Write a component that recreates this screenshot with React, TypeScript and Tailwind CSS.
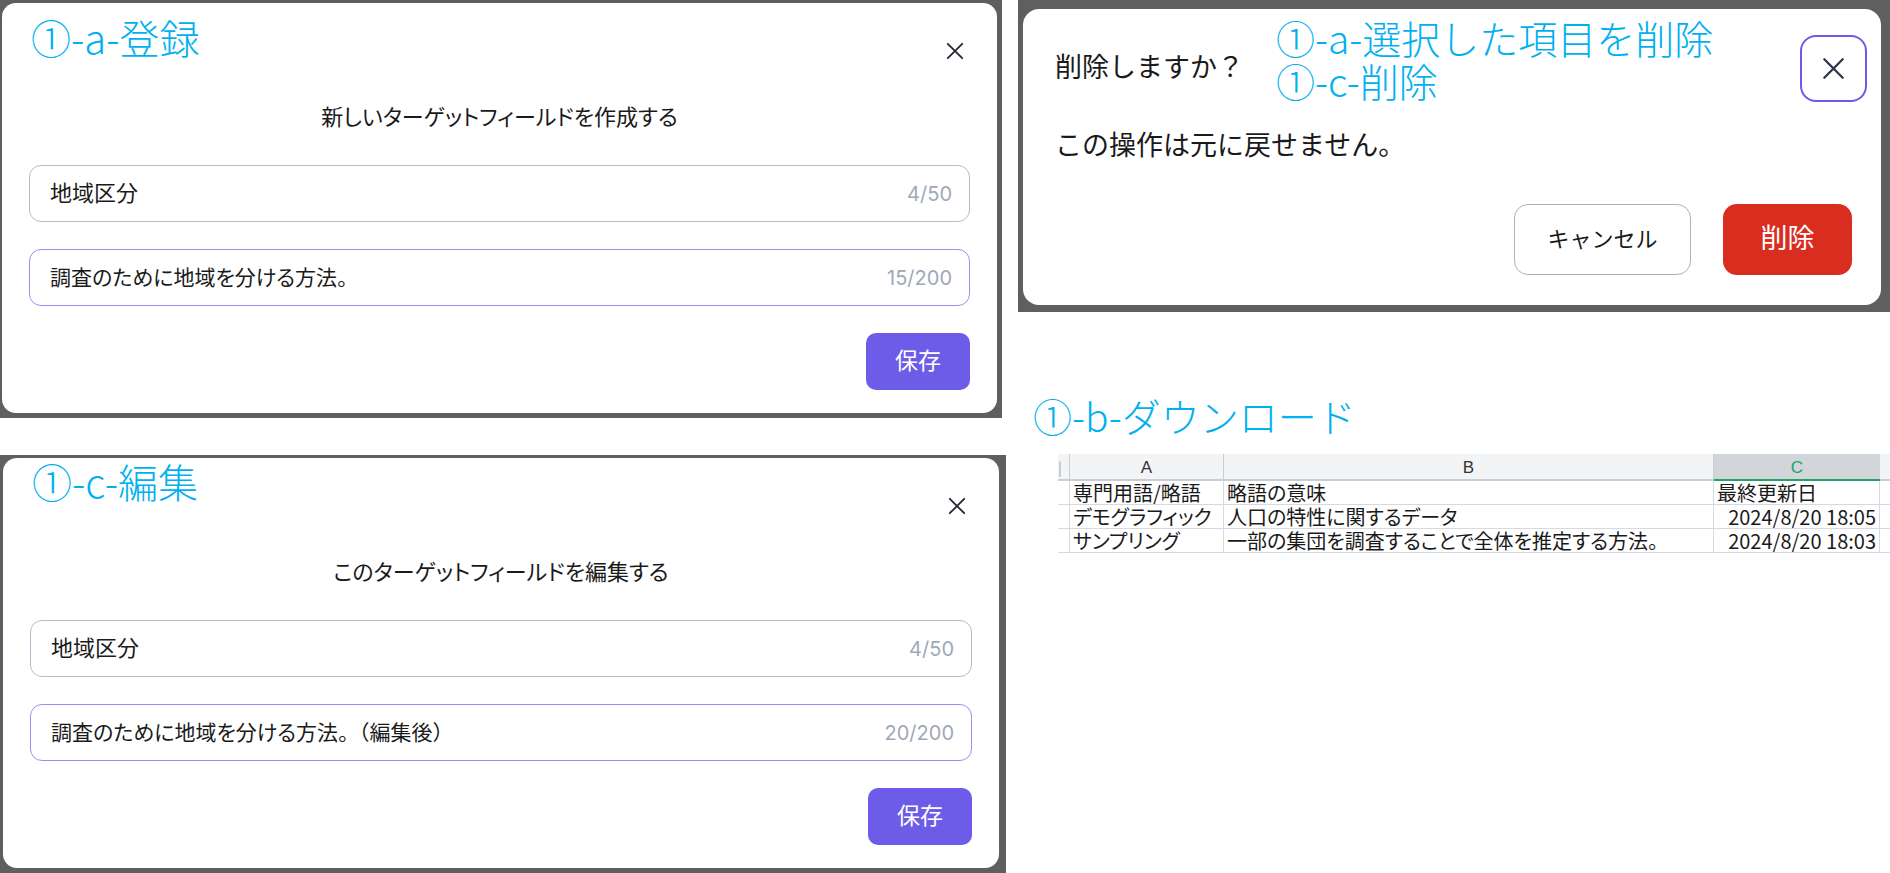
import React from "react";

const jp = "font-['Inter','Noto_Sans_CJK_JP',sans-serif]";
const note = "font-['Noto_Sans_CJK_JP',sans-serif] font-light text-[#00b0f0] leading-none";

function XIcon({ className = "" }: { className?: string }) {
  return (
    <svg viewBox="0 0 20 20" className={className} fill="none" stroke="currentColor" strokeWidth={2} strokeLinecap="round">
      <path d="M2 2L18 18M18 2L2 18" />
    </svg>
  );
}

interface FieldDialogProps {
  frame: string;
  label: string;
  labelTop: string;
  title: string;
  name: string;
  nameCount: string;
  desc: string;
  suffix?: string;
  descCount: string;
}

const FieldDialog = ({ frame, label, labelTop, title, name, nameCount, desc, suffix, descCount }: FieldDialogProps) => (
  <div className={`bg-[#5f5f5f] h-[418px] ${frame}`}>
    <div className={`relative h-full rounded-[14px] bg-white px-[27px] pt-[39px] pb-[23px] flex flex-col ${jp}`}>
      <div className={`absolute left-[29px] ${labelTop} text-[40px] ${note}`}>{label}</div>
      <div className="flex justify-end pr-[5px]">
        <XIcon className="w-[20px] h-[18px] text-[#222831]" />
      </div>
      <h2 className="mt-[43px] text-center text-[22px] leading-[28px] text-[#1a1a1a] [font-feature-settings:'palt']">{title}</h2>
      <div className="mt-[34px] h-[57px] rounded-[12px] border-[1.5px] border-[#b4bccb] flex items-center justify-between pl-[20px] pr-[17px]">
        <span className="text-[22px] text-[#1a1a1a] [font-feature-settings:'palt']">{name}</span>
        <span className="text-[20px] text-[#a0a8b8]">{nameCount}</span>
      </div>
      <div className="mt-[27px] h-[57px] rounded-[12px] border-[1.5px] border-[#9d8cf0] flex items-center justify-between pl-[20px] pr-[17px]">
        <span className="text-[21px] text-[#1a1a1a]">
          <span className="[font-feature-settings:'palt']">{desc}</span>
          {suffix}
        </span>
        <span className="text-[20px] text-[#a0a8b8]">{descCount}</span>
      </div>
      <div className="mt-[27px] flex justify-end">
        <button className="w-[104px] h-[57px] rounded-[10px] bg-[#6c5ce7] text-white text-[23px]">保存</button>
      </div>
    </div>
  </div>
);

const rows = [
  { a: "専門用語/略語", b: "略語の意味", c: "最終更新日", right: false },
  { a: "デモグラフィック", b: "人口の特性に関するデータ", c: "2024/8/20 18:05", right: true },
  { a: "サンプリング", b: "一部の集団を調査することで全体を推定する方法。", c: "2024/8/20 18:03", right: true },
];

const cell = "h-[24px] border-b border-r border-[#d5d9e3] leading-[24px] px-[3px] whitespace-nowrap overflow-hidden";

export default function App() {
  return (
    <div className="w-[1890px] h-[873px] bg-white flex gap-[12px] overflow-hidden">
      <div className="w-[1006px] flex flex-col">
        <div className="w-[1002px]">
          <FieldDialog
            frame="pt-[3px] pl-[2px] pr-[5px] pb-[5px]"
            label="①-a-登録"
            labelTop="top-[14px]"
            title="新しいターゲットフィールドを作成する"
            name="地域区分"
            nameCount="4/50"
            desc="調査のために地域を分ける方法"
            suffix="。"
            descCount="15/200"
          />
        </div>
        <div className="mt-[37px]">
          <FieldDialog
            frame="pt-[3px] pl-[3px] pr-[7px] pb-[5px]"
            label="①-c-編集"
            labelTop="top-[3px]"
            title="このターゲットフィールドを編集する"
            name="地域区分"
            nameCount="4/50"
            desc="調査のために地域を分ける方法"
            suffix="。（編集後）"
            descCount="20/200"
          />
        </div>
      </div>

      <div className="flex-1 flex flex-col">
        <div className="h-[312px] bg-[#5f5f5f] pt-[9px] pl-[5px] pr-[9px] pb-[7px]">
          <div className={`relative h-full rounded-[16px] bg-white pl-[32px] pr-[14px] pt-[26px] ${jp}`}>
            <div className={`absolute left-[253px] top-[9px] text-[39px] ${note}`}>
              <div className="h-[43px]">①-a-選択した項目を削除</div>
              <div>①-c-削除</div>
            </div>
            <div className="flex items-center justify-between h-[67px]">
              <span className="text-[27px] text-[#1a1a1a]">削除しますか？</span>
              <button className="w-[67px] h-[67px] rounded-[16px] border-2 border-[#6b5ce7] flex items-center justify-center">
                <XIcon className="w-[23px] h-[23px] text-[#2d3748]" />
              </button>
            </div>
            <p className="mt-[26px] text-[27px] leading-[36px] text-[#1a1a1a]">この操作は元に戻せません。</p>
            <div className="mt-[40px] flex justify-end gap-[32px] pr-[15px]">
              <button className="w-[177px] h-[71px] rounded-[14px] border-[1.5px] border-[#aab2c0] bg-white text-[22px] text-[#1a1a1a]">キャンセル</button>
              <button className="w-[129px] h-[71px] rounded-[14px] bg-[#d92d20] text-white text-[27px]">削除</button>
            </div>
          </div>
        </div>

        <div className={`mt-[84px] ml-[15px] text-[39px] ${note}`}>①-b-ダウンロード</div>

        <div className="mt-[19px] ml-[40px] grid grid-cols-[12px_154px_490px_166px_1fr] font-['Noto_Sans_CJK_JP',sans-serif] [font-feature-settings:'palt'] text-[20px] text-[#1a1a1a]">
          <div className="h-[27px] bg-[#f3f4f6] border-r border-b-2 border-[#c9cdd6] text-[#9ca3af] text-[14px] leading-[27px]">|</div>
          <div className="h-[27px] bg-[#f3f4f6] border-r border-b-2 border-[#c9cdd6] text-center text-[17px] leading-[27px] font-['Liberation_Sans',sans-serif] text-[#333]">A</div>
          <div className="h-[27px] bg-[#f3f4f6] border-r border-b-2 border-[#c9cdd6] text-center text-[17px] leading-[27px] font-['Liberation_Sans',sans-serif] text-[#333]">B</div>
          <div className="h-[27px] bg-[#d2d5da] border-b-2 border-[#21a366] text-center text-[17px] leading-[27px] font-['Liberation_Sans',sans-serif] text-[#21a366]">C</div>
          <div className="h-[27px] bg-[#f3f4f6] border-b-2 border-[#c9cdd6]"></div>
          {rows.map((r) => (
            <React.Fragment key={r.a}>
              <div className="h-[24px] border-r border-b border-[#d5d9e3]"></div>
              <div className={cell}>{r.a}</div>
              <div className={cell}>{r.b}</div>
              <div className={`${cell} ${r.right ? "text-right" : ""}`}>{r.c}</div>
              <div className="h-[24px] border-b border-[#d5d9e3]"></div>
            </React.Fragment>
          ))}
        </div>
      </div>
    </div>
  );
}
